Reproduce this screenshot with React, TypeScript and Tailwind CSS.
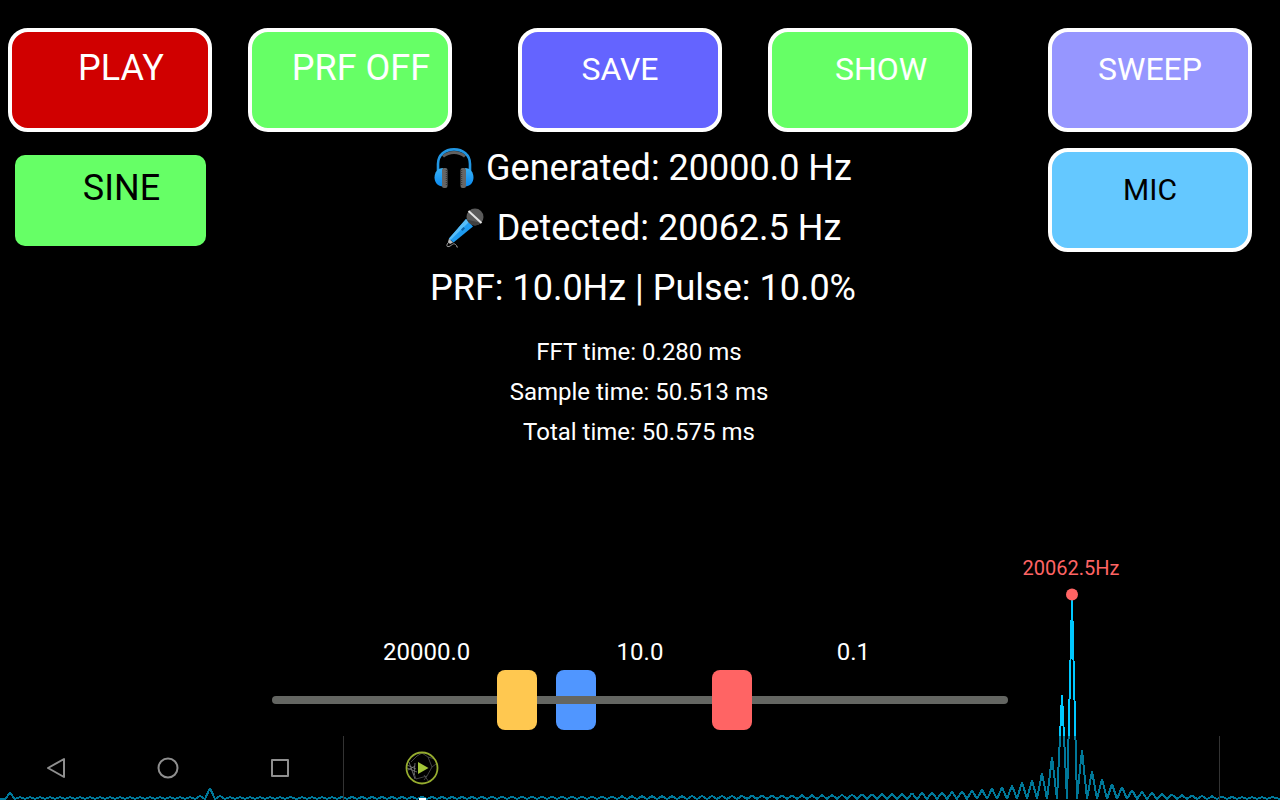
import { useState } from "react";
import clsx from "clsx";

interface PadButtonProps {
  label: string;
  className: string;
}

interface ThumbSliderProps {
  id: string;
  value: number;
  onChange: (value: number) => void;
  className: string;
}

const SLIDER_MAX = 695;

const TIMINGS = [
  "FFT time: 0.280 ms",
  "Sample time: 50.513 ms",
  "Total time: 50.575 ms",
];

// Spectrum geometry: lobes are 10 units apart around the main peak
const FLOOR = 799;
const PEAK_X = 1072;
const LEFT_LOBES = [105, 43, 27, 20, 18];
const RIGHT_LOBES = [50, 29, 21, 16, 13, 10];
const LOW_PEAKS: Record<number, number> = { 10: 7, 200: 4, 210: 12, 220: 4 };

function buildSpectrum(): string {
  const lobes: [number, number][] = [];

  for (let x = 10; x <= 290; x += 10) {
    lobes.push([x, LOW_PEAKS[x] ?? 3]);
  }
  for (let k = 77; k >= 1; k--) {
    lobes.push([PEAK_X - 10 * k, LEFT_LOBES[k - 1] ?? 2 + 75 / k]);
  }
  lobes.push([PEAK_X, 200]);
  for (let k = 1; k <= 20; k++) {
    const height = RIGHT_LOBES[k - 1] ?? Math.max(3, 65 / k - 1);
    lobes.push([PEAK_X + 10 * k, height]);
  }

  const points = lobes.map(
    ([x, height]) => `${x - 5},${FLOOR} ${x},${800 - height}`,
  );
  return `0,${FLOOR} ${points.join(" ")} 1280,${FLOOR}`;
}

const SPECTRUM = buildSpectrum();

function PadButton({ label, className }: PadButtonProps): React.ReactElement {
  return (
    <button
      type="button"
      className={clsx(
        "flex h-[104px] w-[204px] items-start justify-center rounded-[20px] border-4 border-white leading-10",
        className,
      )}
    >
      {label}
    </button>
  );
}

function ThumbSlider({
  id,
  value,
  onChange,
  className,
}: ThumbSliderProps): React.ReactElement {
  return (
    <input
      id={id}
      type="range"
      min={0}
      max={SLIDER_MAX}
      value={value}
      onChange={(e) => onChange(Number(e.target.value))}
      className={clsx(
        "pointer-events-none absolute inset-0 h-[60px] w-full appearance-none bg-transparent outline-none [&::-webkit-slider-thumb]:pointer-events-auto [&::-webkit-slider-thumb]:h-[60px] [&::-webkit-slider-thumb]:w-10 [&::-webkit-slider-thumb]:appearance-none [&::-webkit-slider-thumb]:rounded-lg",
        className,
      )}
    />
  );
}

function HeadphonesIcon(): React.ReactElement {
  return (
    <svg viewBox="0 0 40 40" className="size-10" aria-hidden="true">
      <defs>
        <linearGradient id="cup" x1="0" y1="0" x2="0" y2="1">
          <stop offset="0" stopColor="#39b1f5" />
          <stop offset="1" stopColor="#0a8af0" />
        </linearGradient>
      </defs>
      <path
        d="M9 8.500 C15 3 25 3 31 8.500"
        fill="none"
        stroke="#616161"
        strokeWidth="3"
      />
      <path
        d="M4 24 V16 C4 7 11 1.4 20 1.4 S36 7 36 16 V24"
        fill="none"
        stroke="#2196e3"
        strokeWidth="2.6"
      />
      <path d="M9 20 C3.500 20 .5 24.500 .5 29.500 S4 38.500 9 38.500 Z" fill="url(#cup)" />
      <path d="M31 20 C36.500 20 39.500 24.500 39.500 29.500 S36 38.500 31 38.500 Z" fill="url(#cup)" />
      <rect x="8" y="20" width="5.500" height="20" rx="2" fill="#666" />
      <rect x="26.500" y="20" width="5.500" height="20" rx="2" fill="#666" />
      <path
        d="M12.500 22 V38 M27.500 22 V38"
        stroke="#3c3c3c"
        strokeWidth="1.500"
        strokeDasharray="1 1"
      />
    </svg>
  );
}

function MicrophoneIcon(): React.ReactElement {
  return (
    <svg viewBox="0 0 40 40" className="size-10" aria-hidden="true">
      <path
        d="M5 33 C1 36 1 39.500 4 38.500 S8 34.500 10.500 36.500 S10 39 13 39"
        fill="none"
        stroke="#9e9e9e"
        strokeWidth="1"
      />
      <path d="M4 30.500 L8 34.500 L5 36 L3 34 Z" fill="#bdbdbd" />
      <path d="M21 11 L28 18.500 L8.500 34.500 L4 30.500 Z" fill="#1e9bf0" />
      <path d="M21 11 L24 14 L5.500 32 L4 30.500 Z" fill="#58bdf7" />
      <path d="M16 21.500 L18.500 19 L20 20.500 L17.500 23 Z" fill="#0b62a8" />
      <circle cx="30" cy="9" r="8.500" fill="#5a5a5a" />
      <path d="M22 11.500 A8.500 8.500 0 0 0 36 15 Z" fill="#404040" />
      <path d="M23.500 3 L36.500 15" stroke="#e4e4e4" strokeWidth="2" />
    </svg>
  );
}

function SpectrumChart(): React.ReactElement {
  return (
    <svg
      viewBox="0 540 1280 260"
      className="pointer-events-none absolute inset-x-0 bottom-0 w-full"
      role="img"
      aria-label="Frequency spectrum"
    >
      <polyline
        points={SPECTRUM}
        fill="none"
        stroke="#00c8ff"
        strokeWidth="2"
        strokeLinejoin="bevel"
        shapeRendering="crispEdges"
      />
      <circle cx={PEAK_X} cy="594.500" r="6" fill="#ff6464" />
      <text x="1071" y="575" textAnchor="middle" fontSize="20" fill="#ff6464">
        20062.5Hz
      </text>
    </svg>
  );
}

function NavigationBar(): React.ReactElement {
  return (
    <nav className="relative mt-1.5 flex h-16 bg-black/40">
      <div className="flex w-[344px] border-r border-[#333] text-[#8f8f8f]">
        <button type="button" aria-label="Back" className="flex w-28 items-center justify-center">
          <svg viewBox="0 0 24 24" className="size-6" fill="none" stroke="currentColor" strokeWidth="2" strokeLinejoin="round">
            <path d="M20 3 V21 L4 12 Z" />
          </svg>
        </button>
        <button type="button" aria-label="Home" className="flex w-28 items-center justify-center">
          <svg viewBox="0 0 24 24" className="size-6" fill="none" stroke="currentColor" strokeWidth="2">
            <circle cx="12" cy="12" r="9.500" />
          </svg>
        </button>
        <button type="button" aria-label="Recent apps" className="flex w-28 items-center justify-center">
          <svg viewBox="0 0 24 24" className="size-6" fill="none" stroke="currentColor" strokeWidth="2" strokeLinejoin="round">
            <rect x="4" y="4" width="16" height="16" />
          </svg>
        </button>
      </div>
      <div className="flex flex-1 pl-[54px]">
        <button type="button" aria-label="Signal app" className="relative flex w-12 items-center justify-center">
          <svg viewBox="0 0 34 34" className="size-[34px]" fill="none">
            <g stroke="#5e5e5e" strokeWidth="0.700">
              <path d="M12 5 L17 2 L23 6 L30 8 M23 6 L27 16 L22 25 L19 29 M22 25 L11 28 L9 22 M12 5 L6 11 M27 16 L31 13 M19 24 L24 31" />
              <path d="M2 14 L11 18 M3 19 L10 15 M4 11 L10 28 M10 12 L9 24 M2 17 L12 21" stroke="#8c8c8c" />
            </g>
            <circle cx="17" cy="17" r="15.500" stroke="#96ad2f" strokeWidth="1.800" />
            <path d="M13 11 L23.500 17 L13 23 Z" fill="#a4c639" />
          </svg>
          <span className="absolute bottom-0 h-0.5 w-[7px] bg-white" />
        </button>
      </div>
      <div className="w-[61px] border-l border-[#333]" />
    </nav>
  );
}

export default function App(): React.ReactElement {
  const [frequency, setFrequency] = useState(225);
  const [prf, setPrf] = useState(284);
  const [pulse, setPulse] = useState(439);

  return (
    <main className="relative flex min-h-screen flex-col bg-black font-[Roboto,sans-serif] text-white">
      <SpectrumChart />

      {/* Controls */}
      <div className="relative grid grid-cols-[240fr_270fr_250fr_280fr_204fr] pl-2 pr-7 pt-7">
        <PadButton label="PLAY" className="bg-[#d00000] pl-[22px] pt-4 text-4xl leading-10" />
        <PadButton label="PRF OFF" className="bg-[#66ff66] pl-[22px] pt-4 text-4xl leading-10" />
        <PadButton label="SAVE" className="bg-[#6464ff] pt-[17px] text-[32px]" />
        <PadButton label="SHOW" className="bg-[#66ff66] pl-[22px] pt-[17px] text-[32px]" />
        <PadButton label="SWEEP" className="bg-[#9696ff] pt-[17px] text-[32px]" />
      </div>

      {/* Readings */}
      <div className="relative mt-4 flex items-start pl-2 pr-7">
        <div className="w-[204px] p-[7px]">
          <button
            type="button"
            className="flex h-[91px] w-[191px] items-start justify-center rounded-[10px] bg-[#66ff66] pl-[22px] pt-[13px] text-4xl leading-10 text-black"
          >
            SINE
          </button>
        </div>
        <div className="flex-1 pl-[18px] text-center">
          <div className="flex flex-col gap-5 pl-2 text-4xl leading-10">
            <p className="flex items-center justify-center gap-3">
              <HeadphonesIcon />
              Generated: 20000.0 Hz
            </p>
            <p className="flex items-center justify-center gap-3">
              <MicrophoneIcon />
              Detected: 20062.5 Hz
            </p>
            <p>PRF: 10.0Hz | Pulse: 10.0%</p>
          </div>
          <div className="mt-6 text-2xl leading-10">
            {TIMINGS.map((timing) => (
              <p key={timing}>{timing}</p>
            ))}
          </div>
        </div>
        <PadButton label="MIC" className="bg-[#64c8ff] pt-[18px] text-[30px] text-black" />
      </div>

      {/* Sliders */}
      <div className="relative mt-auto">
        <div className="mx-auto grid max-w-[640px] grid-cols-3 text-center text-2xl leading-9">
          <label htmlFor="frequency">20000.0</label>
          <label htmlFor="prf">10.0</label>
          <label htmlFor="pulse">0.1</label>
        </div>
        <div className="relative mx-auto flex h-[60px] max-w-[736px] items-center">
          <ThumbSlider
            id="prf"
            value={prf}
            onChange={setPrf}
            className="[&::-webkit-slider-thumb]:bg-[#5096ff]"
          />
          <div className="relative h-2 w-full rounded-full bg-[#646662]" />
          <ThumbSlider
            id="frequency"
            value={frequency}
            onChange={setFrequency}
            className="[&::-webkit-slider-thumb]:bg-[#ffc850]"
          />
          <ThumbSlider
            id="pulse"
            value={pulse}
            onChange={setPulse}
            className="[&::-webkit-slider-thumb]:bg-[#ff6464]"
          />
        </div>
      </div>

      <NavigationBar />
    </main>
  );
}
